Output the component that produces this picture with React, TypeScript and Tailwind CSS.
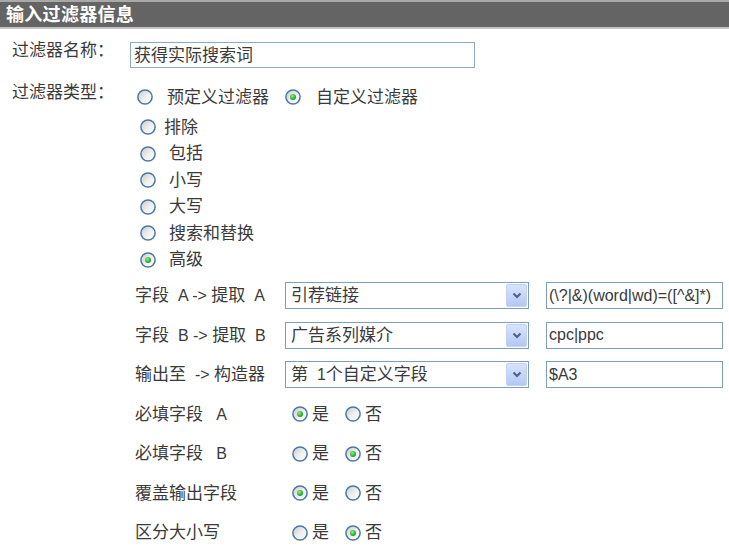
import React, { useId } from "react";

function Radio({ checked }: { checked?: boolean }) {
  const id = useId().replace(/[^a-zA-Z0-9]/g, "");
  return (
    <svg width="16" height="16" viewBox="0 0 16 16" className="shrink-0 block">
      <defs>
        <linearGradient id={`g${id}`} x1="0" y1="0" x2="1" y2="1">
          <stop offset="0" stopColor="#c8c8c8" />
          <stop offset="0.55" stopColor="#f1f1f1" />
          <stop offset="1" stopColor="#ffffff" />
        </linearGradient>
        <radialGradient id={`d${id}`} cx="0.4" cy="0.35" r="0.65">
          <stop offset="0" stopColor="#8ff08f" />
          <stop offset="1" stopColor="#149a14" />
        </radialGradient>
      </defs>
      <circle cx="8" cy="8" r="7.1" fill={`url(#g${id})`} stroke="#4a78a5" strokeWidth="1.5" />
      {checked && <circle cx="8" cy="8" r="3" fill={`url(#d${id})`} />}
    </svg>
  );
}

function Select({ text }: { text: React.ReactNode }) {
  return (
    <div className="w-[244px] h-[27px] border border-[#7f9db9] bg-white flex items-stretch">
      <div className="flex-1 flex items-center pl-[5px] leading-none whitespace-pre">{text}</div>
      <div className="w-[21px] m-[1px] rounded-[2px] border border-[#c3d2f3] bg-linear-to-b from-[#d8e3fd] to-[#b4c8f6] flex items-center justify-center">
        <svg width="10" height="7" viewBox="0 0 10 7">
          <path d="M1.5 1.5 L5 5 L8.5 1.5" fill="none" stroke="#4d6185" strokeWidth="2" />
        </svg>
      </div>
    </div>
  );
}

function TextBox({ text, w }: { text: string; w: string }) {
  return (
    <div className={`${w} h-[27px] border border-[#7f9db9] bg-white flex items-center pl-[2px] text-[16px] leading-none whitespace-pre`}>
      {text}
    </div>
  );
}

function FieldRow({ label, sel, val }: { label: React.ReactNode; sel: React.ReactNode; val: string }) {
  return (
    <div className="h-[39.5px] flex items-center">
      <div className="w-[150px] whitespace-pre leading-none">{label}</div>
      <Select text={sel} />
      <div className="ml-[17px]">
        <TextBox text={val} w="w-[177px]" />
      </div>
    </div>
  );
}

function BoolRow({ label, yes }: { label: React.ReactNode; yes: boolean }) {
  return (
    <div className="h-[39.5px] flex items-center">
      <div className="w-[157px] whitespace-pre leading-none">{label}</div>
      <Radio checked={yes} />
      <span className="ml-[4px] leading-none">是</span>
      <span className="ml-[16px]">
        <Radio checked={!yes} />
      </span>
      <span className="ml-[4px] leading-none">否</span>
    </div>
  );
}

const L = ({ t }: { t: string }) => <span className="text-[16px]">{t}</span>;

export default function App() {
  const subs = [
    { t: "排除", sp: false },
    { t: "包括", sp: true },
    { t: "小写", sp: true },
    { t: "大写", sp: true },
    { t: "搜索和替换", sp: true },
    { t: "高级", sp: true, c: true },
  ];
  return (
    <div className="w-[729px] h-[553px] overflow-hidden bg-white text-[#3a3a3a] text-[17px] [font-family:'Liberation_Sans','Noto_Sans_CJK_SC',sans-serif]">
      <div className="h-[29px] border-t-2 border-t-[#a9a9a9] border-b-2 border-b-[#c4c4c4] bg-[#646464] flex items-center pl-[6px] text-white font-bold text-[18px] tracking-[0.3px] leading-none">
        输入过滤器信息
      </div>
      <div className="pl-[12px]">
        <div className="mt-[13px] flex items-start">
          <div className="w-[118px] leading-[18px]">过滤器名称：</div>
          <div className="w-[345px] h-[26px] border border-[#8ea9c8] flex items-center pl-[3px] leading-none">
            获得实际搜索词
          </div>
        </div>
        <div className="mt-[16px] flex items-start">
          <div className="w-[118px] leading-[18px]">过滤器类型：</div>
          <div className="flex flex-col">
            <div className="h-[26px] flex items-center pl-[7px]">
              <Radio />
              <span className="ml-[14px] leading-none">预定义过滤器</span>
              <span className="ml-[16px]">
                <Radio checked />
              </span>
              <span className="ml-[15px] leading-none">自定义过滤器</span>
            </div>
            <div className="mt-[4px] flex flex-col">
              {subs.map((s) => (
                <div key={s.t} className="h-[26.5px] flex items-center pl-[10px]">
                  <Radio checked={!!s.c} />
                  <span className={`${s.sp ? "ml-[13px]" : "ml-[8px]"} leading-none`}>{s.t}</span>
                </div>
              ))}
            </div>
          </div>
        </div>
        <div className="mt-[3px] pl-[123px] flex flex-col">
          <FieldRow
            label={<>字段<L t={"  A -> "} />提取<L t={"  A"} /></>}
            sel="引荐链接"
            val="(\?|&)(word|wd)=([^&]*)"
          />
          <FieldRow
            label={<>字段<L t={"  B -> "} />提取<L t={"  B"} /></>}
            sel="广告系列媒介"
            val="cpc|ppc"
          />
          <FieldRow
            label={<>输出至<L t={"  -> "} />构造器</>}
            sel={<>第<L t={"  1"} />个自定义字段</>}
            val="$A3"
          />
          <BoolRow label={<>必填字段<L t={"   A"} /></>} yes={true} />
          <BoolRow label={<>必填字段<L t={"   B"} /></>} yes={false} />
          <BoolRow label="覆盖输出字段" yes={true} />
          <BoolRow label="区分大小写" yes={false} />
        </div>
      </div>
    </div>
  );
}
